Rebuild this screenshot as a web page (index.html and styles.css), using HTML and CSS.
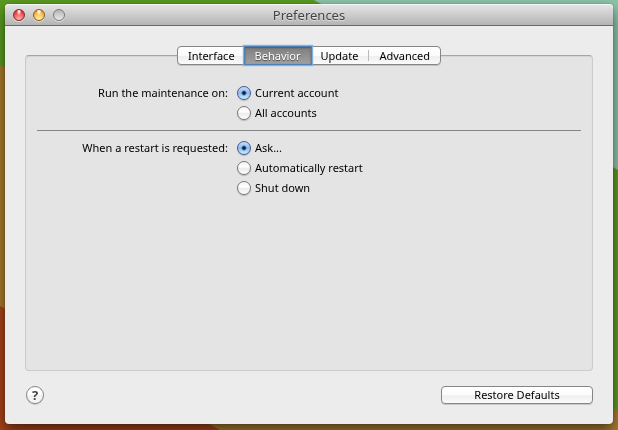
FILE: index.html
```html
<!DOCTYPE html>
<html lang="en">
<head>
    <meta charset="UTF-8">
    <meta name="viewport" content="width=device-width, initial-scale=1.0">
    <title>Preferences</title>
    <link rel="stylesheet" href="styles.css">
</head>
<body>
    <svg class="wallpaper" viewBox="0 0 618 430" preserveAspectRatio="none" aria-hidden="true">
        <rect width="618" height="430" fill="#a87c2e"/>
        <path d="M0 0H320L618 170V411L300 230L0 65Z" fill="#5a9a20"/>
        <path d="M314 0H618V170Z" fill="#8cc4a8"/>
        <path d="M0 306L220 430H0Z" fill="#a8441a"/>
    </svg>

    <main class="window">
        <header class="titlebar">
            <div class="lights">
                <button class="light red" aria-label="Close"></button>
                <button class="light yellow" aria-label="Minimize"></button>
                <button class="light gray" aria-label="Zoom" disabled></button>
            </div>
            <h1>Preferences</h1>
        </header>

        <section class="content">
            <nav class="tabs">
                <button class="tab">Interface</button>
                <button class="tab active">Behavior</button>
                <button class="tab">Update</button>
                <button class="tab divided">Advanced</button>
            </nav>

            <form class="panel">
                <div class="group" role="radiogroup" aria-labelledby="accounts-label">
                    <span class="label" id="accounts-label">Run the maintenance on:</span>
                    <div class="options">
                        <label><input type="radio" name="accounts" checked>Current account</label>
                        <label><input type="radio" name="accounts">All accounts</label>
                    </div>
                </div>
                <hr>
                <div class="group" role="radiogroup" aria-labelledby="restart-label">
                    <span class="label" id="restart-label">When a restart is requested:</span>
                    <div class="options">
                        <label><input type="radio" name="restart" checked>Ask...</label>
                        <label><input type="radio" name="restart">Automatically restart</label>
                        <label><input type="radio" name="restart">Shut down</label>
                    </div>
                </div>
            </form>

            <footer class="footer">
                <button class="help" aria-label="Help">?</button>
                <button class="restore">Restore Defaults</button>
            </footer>
        </section>
    </main>
</body>
</html>
```

FILE: styles.css
```css
* {
    box-sizing: border-box;
}
body {
    display: flex;
    min-height: 100vh;
    margin: 0;
    padding: 4px 5px 6px;
    font-family: "Noto Sans", "Open Sans", sans-serif;
    font-size: 11px;
    line-height: 20px;
    color: #000;
}
button {
    margin: 0;
    padding: 0;
    font: inherit;
    color: inherit;
}
.wallpaper {
    position: fixed;
    top: 0;
    left: 0;
    width: 100%;
    height: 100%;
    z-index: -1;
}
.window {
    flex: 1;
    display: flex;
    flex-direction: column;
    border-radius: 4px;
    background-color: #ececec;
    box-shadow: 0 0 1px rgba(0, 0, 0, 0.6), 0 6px 14px rgba(0, 0, 0, 0.55);
}
.titlebar {
    display: grid;
    grid-template-columns: 1fr auto 1fr;
    align-items: center;
    height: 22px;
    padding: 0 8px;
    border-bottom: 1px solid #696969;
    border-radius: 4px 4px 0 0;
    background: linear-gradient(#e6e6e6, #b4b4b4);
    box-shadow: inset 0 1px 0 #f4f4f4;
}
.titlebar h1 {
    margin: 0;
    font-size: 13px;
    font-weight: normal;
    color: #444;
    text-shadow: 0 1px 0 rgba(255, 255, 255, 0.5);
}
.lights {
    display: flex;
    gap: 8px;
}
.light {
    width: 12px;
    height: 12px;
    border: 1px solid #7a7a7a;
    border-radius: 50%;
    box-shadow: 0 1px 0 rgba(255, 255, 255, 0.5);
}
.light.red {
    border-color: #86292b;
    background: radial-gradient(ellipse at 50% 15%, #fff 0, #fbb 15%, transparent 35%), radial-gradient(circle at 50% 90%, #ffb4b0, #ee4c52 60%, #b7202b);
}
.light.yellow {
    border-color: #8f5a22;
    background: radial-gradient(ellipse at 50% 15%, #fff 0, #ffe9b8 15%, transparent 35%), radial-gradient(circle at 50% 90%, #fff4a0, #f7b94c 60%, #c87a24);
}
.light.gray {
    background: linear-gradient(#b4b4b4, #d0d0d0 50%, #e8e8e8);
}
.content {
    flex: 1;
    display: flex;
    flex-direction: column;
    padding: 20px;
}
.tabs {
    z-index: 1;
    display: flex;
    align-self: center;
    height: 19px;
    margin-bottom: -10px;
    border: 1px solid #858585;
    border-radius: 4px;
    background: linear-gradient(#fff, #fbfbfb 50%, #efefef 55%, #fafafa);
    box-shadow: 0 1px 0 rgba(0, 0, 0, 0.15);
}
.tab {
    padding: 0 10px;
    border: 0;
    background: none;
    line-height: 17px;
}
.tab.active {
    background: linear-gradient(#7e7e7e, #a0a0a0);
    color: #fff;
    text-shadow: 0 1px 1px #444;
    box-shadow: 0 0 0 1px #4f81b8, 0 0 1px 2px #7fb0e4, inset 0 1px 2px #555;
}
.tab.divided {
    padding-left: 11px;
    background: linear-gradient(#bbb, #bbb) left center / 1px 11px no-repeat;
}
.panel {
    flex: 1;
    padding: 27px 11px;
    border: 1px solid #cbcbcb;
    border-top-color: #a5a5a5;
    border-radius: 4px;
    background-color: #e4e4e4;
    box-shadow: inset 0 1px 1px #d4d4d4;
}
.group {
    display: grid;
    grid-template-columns: 191px 1fr;
    column-gap: 9px;
}
.label {
    text-align: right;
}
.options label {
    display: flex;
    align-items: center;
    gap: 4px;
    height: 20px;
}
input[type="radio"] {
    appearance: none;
    width: 14px;
    height: 14px;
    margin: 0;
    border: 1px solid #777;
    border-radius: 50%;
    background: linear-gradient(#f4f4f4, #fff 40%, #ececec 55%, #fff);
    box-shadow: 0 1px 1px rgba(0, 0, 0, 0.2);
}
input[type="radio"]:checked {
    border-color: #4a5590;
    background: radial-gradient(circle, #0a1c40 0 1px, transparent 3px), linear-gradient(#c8def8, #8bbdf2 50%, #c5f0ff);
}
hr {
    height: 1px;
    margin: 7px 0;
    border: 0;
    background-color: #858585;
}
.footer {
    display: flex;
    justify-content: space-between;
    align-items: center;
    padding-top: 15px;
}
.help,
.restore {
    height: 18px;
    border: 1px solid #858585;
    background: linear-gradient(#fff, #fbfbfb 50%, #efefef 55%, #fafafa);
    box-shadow: 0 1px 0 rgba(0, 0, 0, 0.15);
    line-height: 16px;
}
.help {
    width: 18px;
    margin-left: 1px;
    border-radius: 50%;
    font-size: 13px;
    font-weight: bold;
    color: #444;
}
.restore {
    width: 152px;
    border-radius: 4px;
}
```
